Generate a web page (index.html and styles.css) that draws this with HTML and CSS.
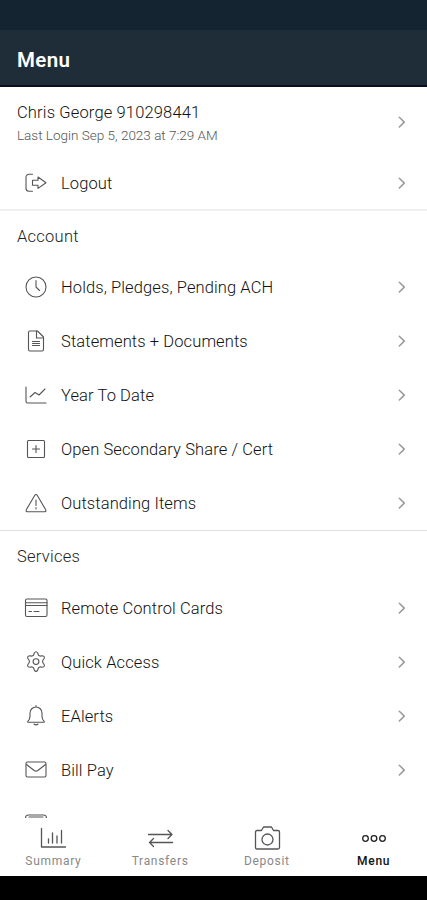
FILE: index.html
```html
<!DOCTYPE html>
<html lang="en">
  <head>
    <meta charset="utf-8"/>
    <title>Menu</title>
    <link rel="stylesheet" href="styles.css">
  </head>
  <body>
    <div class="status-bar"></div>
    <header class="header">Menu</header>

    <main class="content">
      <section class="section section-profile">
        <div class="profile">
          <div class="profile-text">
            <div class="profile-name">Chris George 910298441</div>
            <div class="profile-login">Last Login Sep 5, 2023 at 7:29 AM</div>
          </div>
          <svg class="chevron" viewBox="0 0 8 14"><path d="M1.3 2.2l5 4.9-5 4.9"/></svg>
        </div>
        <div class="row">
          <svg class="icon" viewBox="0 0 24 24"><path d="M8.5 3.2H5a3 3 0 0 0-3 3v11a3 3 0 0 0 3 3h3.5"/><path d="M8.500 9.200H14V6l8 5.700-8 5.700v-3.200H8.500z"/></svg>
          <span class="label">Logout</span>
          <svg class="chevron" viewBox="0 0 8 14"><path d="M1.3 2.2l5 4.9-5 4.9"/></svg>
        </div>
      </section>

      <section class="section section-account">
        <h2 class="title">Account</h2>
        <div class="row">
          <svg class="icon" viewBox="0 0 24 24"><circle cx="12" cy="12" r="10"/><path d="M12 5.5V12l3.5 3.5"/></svg>
          <span class="label">Holds, Pledges, Pending ACH</span>
          <svg class="chevron" viewBox="0 0 8 14"><path d="M1.3 2.2l5 4.9-5 4.9"/></svg>
        </div>
        <div class="row">
          <svg class="icon" viewBox="0 0 24 24"><path d="M13.5 2H6a1.5 1.5 0 0 0-1.5 1.5v17A1.5 1.5 0 0 0 6 22h12a1.5 1.5 0 0 0 1.5-1.5V8z"/><path d="M12.5 2v7h7M8.5 12.5h7M8.5 14.5h7M8.5 16.5h7"/></svg>
          <span class="label">Statements + Documents</span>
          <svg class="chevron" viewBox="0 0 8 14"><path d="M1.3 2.2l5 4.9-5 4.9"/></svg>
        </div>
        <div class="row">
          <svg class="icon" viewBox="0 0 24 24"><path d="M2 4v14.5a1.5 1.5 0 0 0 1.5 1.5H22M6 14l5-4.5 4 2.500 6-6"/></svg>
          <span class="label">Year To Date</span>
          <svg class="chevron" viewBox="0 0 8 14"><path d="M1.3 2.2l5 4.9-5 4.9"/></svg>
        </div>
        <div class="row">
          <svg class="icon" viewBox="0 0 24 24"><rect x="3.5" y="3.5" width="17" height="17" rx="1"/><path d="M12 8.5v7M8.5 12h7"/></svg>
          <span class="label">Open Secondary Share / Cert</span>
          <svg class="chevron" viewBox="0 0 8 14"><path d="M1.3 2.2l5 4.9-5 4.9"/></svg>
        </div>
        <div class="row">
          <svg class="icon" viewBox="0 0 24 24"><path d="M10.8 4.2L2.3 18.8a1.3 1.3 0 0 0 1.1 2h17.2a1.3 1.3 0 0 0 1.1-2L13.2 4.2a1.4 1.4 0 0 0-2.4 0zM12 9v5.5M12 16.5V18"/></svg>
          <span class="label">Outstanding Items</span>
          <svg class="chevron" viewBox="0 0 8 14"><path d="M1.3 2.2l5 4.9-5 4.9"/></svg>
        </div>
      </section>

      <section class="section section-services">
        <h2 class="title">Services</h2>
        <div class="row">
          <svg class="icon" viewBox="0 0 24 24"><rect x="1.5" y="3" width="21.5" height="17.5" rx="1.5"/><path d="M1.5 6.8H23M1.5 9.5H23M5 15.5h2.5M10 15.5h5"/></svg>
          <span class="label">Remote Control Cards</span>
          <svg class="chevron" viewBox="0 0 8 14"><path d="M1.3 2.2l5 4.9-5 4.9"/></svg>
        </div>
        <div class="row">
          <svg class="icon" viewBox="0 0 24 24"><path d="M10.300 3q1.700-2.600 3.400 0l.8 2.200 1.500.9 2.300-.3q3 .3 1.700 2.900l-1.300 1.800v2l1.300 1.800q1.300 2.600-1.700 2.900l-2.300-.3-1.500.9-.8 2.300q-1.700 2.600-3.400 0l-.8-2.300-1.500-.9-2.300.3q-3-.3-1.700-2.900l1.300-1.800v-2L4 8.700Q2.700 6.100 5.700 5.800l2.300.3 1.500-.9z"/><circle cx="12" cy="11.600" r="2.900"/></svg>
          <span class="label">Quick Access</span>
          <svg class="chevron" viewBox="0 0 8 14"><path d="M1.3 2.2l5 4.9-5 4.9"/></svg>
        </div>
        <div class="row">
          <svg class="icon" viewBox="0 0 24 24"><path d="M12 1.5V3M4 17.2q2-2 2-5V9a6 6 0 0 1 12 0v3.2q0 3 2 5 .8 1-.5 1h-15Q3.2 18.2 4 17.2zM10 20q2 1.800 4 0"/></svg>
          <span class="label">EAlerts</span>
          <svg class="chevron" viewBox="0 0 8 14"><path d="M1.3 2.2l5 4.9-5 4.9"/></svg>
        </div>
        <div class="row">
          <svg class="icon" viewBox="0 0 24 24"><rect x="2" y="4" width="20" height="15" rx="1.5"/><path d="M2.5 6.5l7.7 6q1.8 1.3 3.6 0l7.7-6"/></svg>
          <span class="label">Bill Pay</span>
          <svg class="chevron" viewBox="0 0 8 14"><path d="M1.3 2.2l5 4.9-5 4.9"/></svg>
        </div>
        <!-- runs on under the tab bar -->
        <div class="row">
          <svg class="icon" viewBox="0 0 24 24"><path d="M1.5 6q0-3 3-3h15q3 0 3 3v12h-21zM5 5h14"/></svg>
        </div>
      </section>
    </main>

    <nav class="tabs">
      <div class="tab">
        <svg class="tab-icon" viewBox="0 0 28 28"><path d="M2.500 4.500V23H26.500M9.500 15v4M13.500 9v10M18 12v7M22.500 6.500V19"/></svg>
        <span>Summary</span>
      </div>
      <div class="tab">
        <svg class="tab-icon" viewBox="0 0 28 28"><path d="M2.500 10.500H26M22 6.500l4 4-4 4M26.500 18.500h-23M7.500 14.500l-4 4 4 4"/></svg>
        <span>Transfers</span>
      </div>
      <div class="tab">
        <svg class="tab-icon" viewBox="0 0 28 28"><path d="M8.5 6.5l2-3.500h8l2 3.500H25q1.500 0 1.500 1.500v15.500q0 1.500-1.500 1.500H4q-1.500 0-1.500-1.500V8q0-1.500 1.500-1.500z"/><circle cx="14.5" cy="15.5" r="5.5"/></svg>
        <span>Deposit</span>
      </div>
      <div class="tab tab-active">
        <svg class="tab-icon" viewBox="0 0 28 28"><circle cx="5.5" cy="14.5" r="2.8"/><circle cx="14" cy="14.5" r="2.8"/><circle cx="22.5" cy="14.5" r="2.8"/></svg>
        <span>Menu</span>
      </div>
    </nav>
    <div class="system-bar"></div>
  </body>
</html>
```
FILE: styles.css
```css
html, body {
  height: 100%;
  padding: 0;
  margin: 0;
}
body {
  display: flex;
  flex-direction: column;
  height: 900px;
  overflow: hidden;
  background-color: #fff;
  color: #111;
  font-family: Roboto, "Liberation Sans", sans-serif;
}
.status-bar {
  flex: none;
  height: 30px;
  background-color: #142430;
}
.header {
  flex: none;
  box-sizing: border-box;
  height: 57px;
  padding-left: 17px;
  border-bottom: #0b1020 2px solid;
  background-color: #1f2d38;
  color: #fff;
  font-size: 20.5px;
  font-weight: 600;
  line-height: 60px;
  letter-spacing: 0.4px;
}
.content {
  flex: 1;
  min-height: 0;
  overflow: hidden;
}
.section-profile {
  border-bottom: #efefef 2px solid;
}
.section-account {
  border-bottom: #dedede 1px solid;
}
.profile {
  display: flex;
  align-items: center;
  height: 69px;
  padding: 0 21px 0 17px;
}
.profile-text {
  flex: 1;
  padding-top: 4px;
}
.profile-name {
  font-size: 16.5px;
  font-weight: 300;
  line-height: 22px;
  letter-spacing: 0.15px;
}
.profile-login {
  color: #555;
  font-size: 13.5px;
  font-weight: 300;
  line-height: 22px;
}
.title {
  height: 49px;
  margin: 0;
  padding-left: 17px;
  color: #222;
  font-size: 16.5px;
  font-weight: 300;
  line-height: 52px;
  letter-spacing: 0.25px;
}
.section-services .title {
  height: 50px;
}
.row {
  display: flex;
  align-items: center;
  height: 54px;
  padding: 0 21px 0 24px;
}
.section-profile .row {
  height: 53px;
}
.icon {
  width: 24px;
  height: 24px;
  margin-right: 13px;
}
.label {
  flex: 1;
  padding-top: 1px;
  font-size: 16.5px;
  font-weight: 350;
  letter-spacing: 0.1px;
}
.icon, .chevron, .tab-icon {
  flex: none;
  fill: none;
  stroke: #555;
  stroke-width: 1.1;
  stroke-linecap: round;
  stroke-linejoin: round;
}
.chevron {
  width: 8px;
  height: 14px;
  stroke: #999;
  stroke-width: 1.5;
}
.tabs {
  flex: none;
  display: flex;
  height: 58px;
  background-color: #fff;
}
.tab {
  flex: 1;
  display: flex;
  flex-direction: column;
  align-items: center;
  padding-top: 6px;
  color: #888;
  font-size: 12px;
  line-height: 16px;
  letter-spacing: 0.7px;
}
.tab-icon {
  width: 28px;
  height: 28px;
  margin-bottom: 1px;
  stroke-width: 1.3;
}
.tab-active {
  color: #111;
  font-weight: 500;
}
.tab-active .tab-icon {
  stroke: #222;
}
.system-bar {
  flex: none;
  height: 24px;
  background-color: #000;
}
```
